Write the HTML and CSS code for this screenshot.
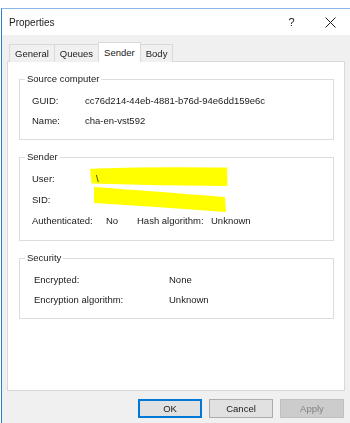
FILE: index.html
```html
<!DOCTYPE html>
<html lang="en">
<head>
    <meta charset="UTF-8">
    <title>Properties</title>
    <link rel="stylesheet" href="styles.css">
</head>
<body>
    <div class="window">
        <div class="titlebar">
            <span class="title">Properties</span>
            <span class="caption-btn">?</span>
            <span class="caption-btn">
                <svg width="11" height="11" viewBox="0 0 11 11">
                    <path d="M0.5 0.5L10.5 10.5M10.5 0.5L0.5 10.5" stroke="#1a1a1a" stroke-width="1" fill="none"/>
                </svg>
            </span>
        </div>

        <div class="tabs">
            <div class="tab">General</div>
            <div class="tab">Queues</div>
            <div class="tab active">Sender</div>
            <div class="tab">Body</div>
        </div>

        <div class="panel">
            <fieldset class="group">
                <legend>Source computer</legend>
                <div class="rows rows-source">
                    <span>GUID:</span><span>cc76d214-44eb-4881-b76d-94e6dd159e6c</span>
                    <span>Name:</span><span>cha-en-vst592</span>
                </div>
            </fieldset>

            <fieldset class="group">
                <legend>Sender</legend>
                <div class="rows rows-sender">
                    <span>User:</span><span class="wide">\</span>
                    <span>SID:</span><span class="wide"></span>
                    <span>Authenticated:</span><span>No</span><span>Hash algorithm:</span><span>Unknown</span>
                    <!-- redaction marks -->
                    <svg class="redact" width="140" height="46" viewBox="0 0 140 46">
                        <path d="M0 2 Q40 -0.5 137 0.5 L137.5 19 Q70 18.5 1.5 16.5 Z" fill="#ffff00"/>
                        <path d="M4 20 Q60 24 135 30 L136 45 Q70 40 4 36 Z" fill="#ffff00"/>
                    </svg>
                </div>
            </fieldset>

            <fieldset class="group">
                <legend>Security</legend>
                <div class="rows rows-security">
                    <span>Encrypted:</span><span>None</span>
                    <span>Encryption algorithm:</span><span>Unknown</span>
                </div>
            </fieldset>
        </div>

        <div class="buttons">
            <button class="default">OK</button>
            <button>Cancel</button>
            <button disabled>Apply</button>
        </div>
    </div>
</body>
</html>
```

FILE: styles.css
```css
body {
    margin: 0;
    width: 350px;
    height: 423px;
    overflow: hidden;
    background-color: #ffffff;
    font-family: "Liberation Sans", Arial, sans-serif;
    font-size: 9.5px;
    color: #1a1a1a;
}
.window {
    margin: 8px 0 0 1px;
    height: 414px;
    border-top: 1px solid #8ab8e8;
    border-left: 1px solid #2b7cd3;
    background-color: #f0f0f0;
}
.titlebar {
    display: flex;
    align-items: center;
    height: 26px;
    background-color: #ffffff;
}
.title {
    flex: 1;
    padding-left: 7px;
    font-size: 10px;
}
.caption-btn {
    display: flex;
    justify-content: center;
    align-items: center;
    width: 39px;
    height: 26px;
    font-size: 11px;
}

.tabs {
    display: flex;
    align-items: flex-end;
    padding: 7px 0 0 7px;
    margin-bottom: -1px;
    position: relative;
}
.tab {
    display: flex;
    align-items: center;
    height: 17px;
    padding: 0 5px;
    margin-left: -1px;
    border: 1px solid #d9d9d9;
    border-bottom: none;
    background-color: #f0f0f0;
}
.tab:first-child {
    margin-left: 0;
}
.tab.active {
    height: 20px;
    padding-bottom: 1px;
    box-sizing: border-box;
    background-color: #ffffff;
    position: relative;
    z-index: 1;
}

.panel {
    margin-left: 5px;
    width: 336px;
    height: 328px;
    border: 1px solid #d9d9d9;
    background-color: #ffffff;
    overflow: hidden;
}
.group {
    margin: 11px 10px 0 11px;
    padding: 5px 0 9px 0;
    border: 1px solid #dcdcdc;
    min-width: 0;
}
.group legend {
    margin-left: 5px;
    padding: 0 2px;
    line-height: 12px;
}
.rows {
    display: grid;
    grid-auto-rows: 20px;
    align-items: center;
    padding-left: 12px;
    position: relative;
}
.rows-source {
    grid-template-columns: 53px auto;
}
.rows-sender {
    grid-template-columns: 74px 31px 74px auto;
    grid-auto-rows: 21px;
}
.rows-sender .wide {
    grid-column: span 3;
    margin-left: -10px;
}
.rows-security {
    grid-template-columns: 135px auto;
    padding-left: 14px;
}
.redact {
    position: absolute;
    left: 70px;
    top: -1px;
    mix-blend-mode: multiply;
}

.buttons {
    display: flex;
    justify-content: flex-end;
    gap: 7px;
    padding: 8px 6px 0 0;
}
.buttons button {
    width: 64px;
    height: 19px;
    padding: 0;
    border: 1px solid #adadad;
    background-color: #e1e1e1;
    font-family: inherit;
    font-size: 9.5px;
    color: #1a1a1a;
}
.buttons button.default {
    border: 2px solid #0078d7;
}
.buttons button:disabled {
    border-color: #bfbfbf;
    background-color: #cccccc;
    color: #838383;
}
```
